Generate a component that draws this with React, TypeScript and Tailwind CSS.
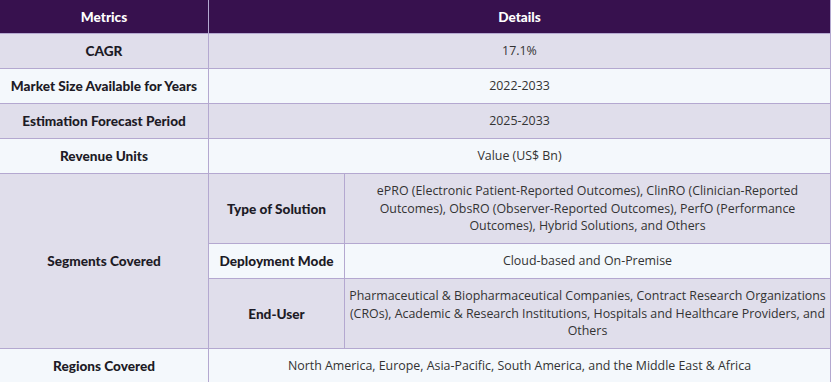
const rows: { label: string; value: string }[] = [
  { label: "CAGR", value: "17.1%" },
  { label: "Market Size Available for Years", value: "2022-2033" },
  { label: "Estimation Forecast Period", value: "2025-2033" },
  { label: "Revenue Units", value: "Value (US$ Bn)" },
];

const segments: { label: string; value: string; tall: boolean }[] = [
  {
    label: "Type of Solution",
    value:
      "ePRO (Electronic Patient-Reported Outcomes), ClinRO (Clinician-Reported Outcomes), ObsRO (Observer-Reported Outcomes), PerfO (Performance Outcomes), Hybrid Solutions, and Others",
    tall: true,
  },
  { label: "Deployment Mode", value: "Cloud-based and On-Premise", tall: false },
  {
    label: "End-User",
    value:
      "Pharmaceutical & Biopharmaceutical Companies, Contract Research Organizations (CROs), Academic & Research Institutions, Hospitals and Healthcare Providers, and Others",
    tall: true,
  },
];

const label = "font-['Lato',sans-serif] font-black text-[13.6px] text-[#1d1b26] text-center border border-[#b4a8d0] px-1 pt-px";
const detail = "font-['Open_Sans',sans-serif] text-[12.4px] leading-[17.6px] text-[#333] text-center border border-[#b4a8d0] px-px";

export default function App() {
  return (
    <div className="w-[831px] h-[382px] overflow-hidden bg-white">
      <table className="w-[832px] table-fixed border-collapse -ml-px">
        <colgroup>
          <col className="w-[209px]" />
          <col className="w-[136px]" />
          <col />
        </colgroup>
        <thead>
          <tr className="h-[33px] bg-[#37114e]">
            <th className="font-['Lato',sans-serif] font-black text-[13.6px] text-white border border-[#b4a8d0] border-t-[#37114e]">
              Metrics
            </th>
            <th colSpan={2} className="font-['Lato',sans-serif] font-black text-[13.6px] text-white border border-[#b4a8d0] border-t-[#37114e]">
              Details
            </th>
          </tr>
        </thead>
        <tbody>
          {rows.map((r, i) => (
            <tr key={r.label} className={`h-[35px] ${i % 2 === 0 ? "bg-[#e0deeb]" : "bg-[#f4f8fc]"}`}>
              <td className={label}>{r.label}</td>
              <td colSpan={2} className={detail}>{r.value}</td>
            </tr>
          ))}
          {segments.map((s, i) => (
            <tr key={s.label} className={s.tall ? "h-[70px] bg-[#e0deeb]" : "h-[35px] bg-[#f4f8fc]"}>
              {i === 0 && (
                <td rowSpan={3} className={`${label} bg-[#e0deeb]`}>
                  Segments Covered
                </td>
              )}
              <td className={label}>{s.label}</td>
              <td className={detail}>{s.value}</td>
            </tr>
          ))}
          <tr className="h-[35px] bg-[#f4f8fc]">
            <td className={label}>Regions Covered</td>
            <td colSpan={2} className={detail}>
              North America, Europe, Asia-Pacific, South America, and the Middle East &amp; Africa
            </td>
          </tr>
        </tbody>
      </table>
    </div>
  );
}
